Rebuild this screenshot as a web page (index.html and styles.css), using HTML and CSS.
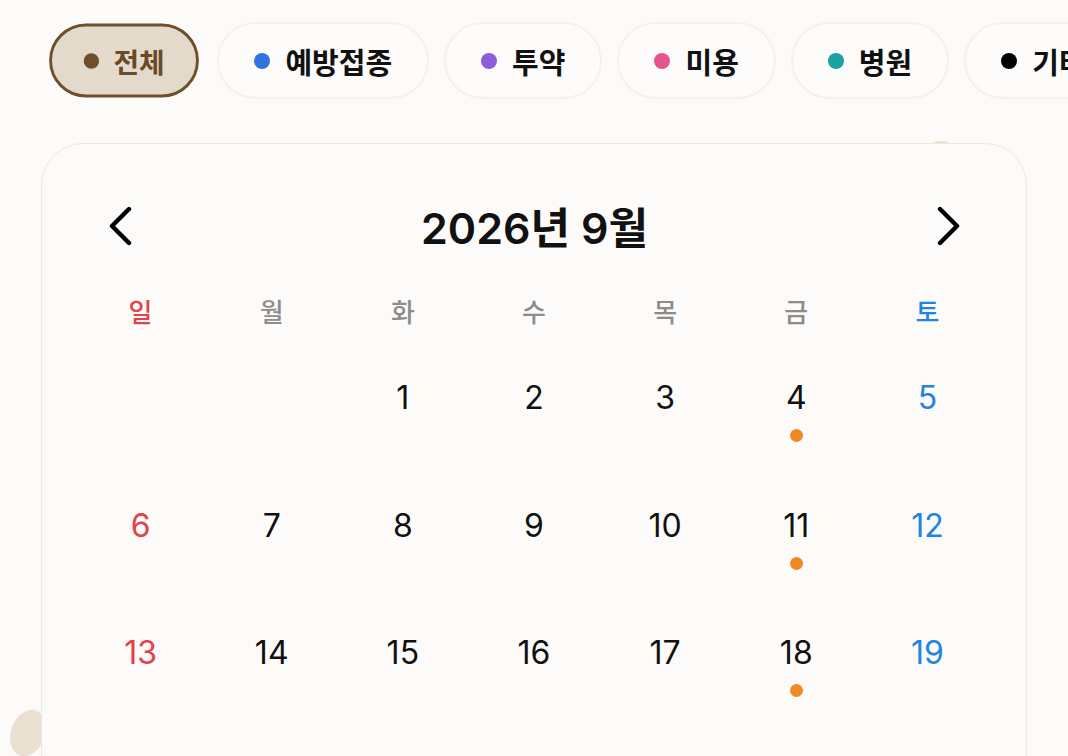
FILE: index.html
```html
<!DOCTYPE html>
<html lang="ko">
<head>
    <meta charset="UTF-8">
    <title>캘린더</title>
    <link rel="stylesheet" href="styles.css">
</head>
<body>
    <div class="blob blob-left"></div>
    <div class="blob blob-top"></div>

    <div class="chips">
        <button class="chip active"><span class="dot dot-all"></span>전체</button>
        <button class="chip"><span class="dot dot-vaccine"></span>예방접종</button>
        <button class="chip"><span class="dot dot-medicine"></span>투약</button>
        <button class="chip"><span class="dot dot-beauty"></span>미용</button>
        <button class="chip"><span class="dot dot-hospital"></span>병원</button>
        <button class="chip"><span class="dot dot-etc"></span>기타</button>
    </div>

    <div class="calendar">
        <div class="cal-header">
            <button class="nav-btn" aria-label="이전 달">
                <svg width="28" height="40" viewBox="0 0 28 40"><path d="M22 3 L5 20 L22 37" fill="none" stroke="#000" stroke-width="4.4" stroke-linecap="round" stroke-linejoin="round"/></svg>
            </button>
            <h2 class="cal-title">2026년 9월</h2>
            <button class="nav-btn" aria-label="다음 달">
                <svg width="28" height="40" viewBox="0 0 28 40"><path d="M6 3 L23 20 L6 37" fill="none" stroke="#000" stroke-width="4.4" stroke-linecap="round" stroke-linejoin="round"/></svg>
            </button>
        </div>

        <div class="weekdays">
            <div class="sun">일</div>
            <div>월</div>
            <div>화</div>
            <div>수</div>
            <div>목</div>
            <div>금</div>
            <div class="sat">토</div>
        </div>

        <div class="days" id="days"></div>
    </div>

    <script>
        // 2026년 9월: 1일은 화요일
        const startDay = 2;
        const lastDate = 30;
        const marked = [4, 11, 18, 25];
        const days = document.getElementById('days');

        for (let i = 0; i < startDay; i++) {
            const empty = document.createElement('div');
            empty.className = 'day';
            days.appendChild(empty);
        }

        for (let d = 1; d <= lastDate; d++) {
            const cell = document.createElement('div');
            const col = (startDay + d - 1) % 7;
            cell.className = 'day';
            if (col === 0) cell.classList.add('sun');
            if (col === 6) cell.classList.add('sat');

            const num = document.createElement('span');
            num.className = 'num';
            num.textContent = d;
            cell.appendChild(num);

            if (marked.includes(d)) {
                const dot = document.createElement('span');
                dot.className = 'event-dot';
                cell.appendChild(dot);
            }
            days.appendChild(cell);
        }
    </script>
</body>
</html>
```

FILE: styles.css
```css
* {
    box-sizing: border-box;
    margin: 0;
    padding: 0;
}

body {
    font-family: Inter, "Noto Sans CJK KR", sans-serif;
    background: #fcfbf9;
    color: #111;
    overflow: hidden;
    position: relative;
    height: 100vh;
}

.blob {
    position: absolute;
    background: #e9e0d2;
    border-radius: 50%;
    z-index: 0;
}

.blob-left {
    left: 11px;
    top: 709px;
    width: 34px;
    height: 48px;
    transform: rotate(20deg);
}

.blob-top {
    left: 926px;
    top: 141px;
    width: 30px;
    height: 20px;
}

.chips {
    display: flex;
    align-items: center;
    gap: 15px;
    padding: 22px 0 0 46px;
    height: 99px;
    white-space: nowrap;
}

.chip {
    flex-shrink: 0;
    display: flex;
    align-items: center;
    gap: 15px;
    height: 77px;
    padding: 0 35px;
    border: 2px solid #f5f1eb;
    border-radius: 40px;
    background: #fdfcfb;
    font-family: inherit;
    font-size: 29px;
    font-weight: 700;
    color: #111;
    cursor: pointer;
}

.chip.active {
    padding: 0 33px;
    border: 3px solid #6e4f2c;
    background: #e4dacb;
    color: #6b4a28;
    transform: scale(0.96);
}

.dot {
    width: 16px;
    height: 16px;
    border-radius: 50%;
}

.dot-all { background: #6e4f2c; }
.dot-vaccine { background: #2f74e2; }
.dot-medicine { background: #8d5cd8; }
.dot-beauty { background: #e5558b; }
.dot-hospital { background: #1aa1a3; }
.dot-etc { background: #000; }

.calendar {
    position: relative;
    z-index: 1;
    margin: 44px 0 0 41px;
    width: 986px;
    min-height: 700px;
    padding: 56px 33px 0;
    background: #fcfbf9;
    border: 1.5px solid #eee8df;
    border-radius: 42px;
}

.cal-header {
    display: flex;
    justify-content: space-between;
    align-items: center;
    height: 50px;
    padding: 0 31px 0 32px;
}

.nav-btn {
    border: none;
    background: none;
    display: flex;
    margin-top: 2px;
    cursor: pointer;
}

.cal-title {
    font-size: 43px;
    font-weight: 600;
    letter-spacing: 0;
}

.weekdays {
    display: grid;
    grid-template-columns: repeat(7, 1fr);
    margin-top: 35px;
    height: 56px;
    line-height: 56px;
    text-align: center;
    font-size: 26px;
    font-weight: 500;
    color: #8c8c8c;
}

.days {
    display: grid;
    grid-template-columns: repeat(7, 1fr);
    grid-auto-rows: 127.5px;
}

.day {
    display: flex;
    flex-direction: column;
    align-items: center;
    padding-top: 38px;
}

.num {
    font-size: 32px;
    line-height: 38px;
    color: #111;
}

.sun, .sun .num { color: #e5414b; }
.sat, .sat .num { color: #1f84e3; }

.event-dot {
    width: 13px;
    height: 13px;
    margin-top: 12px;
    border-radius: 50%;
    background: #f08a24;
}
```
